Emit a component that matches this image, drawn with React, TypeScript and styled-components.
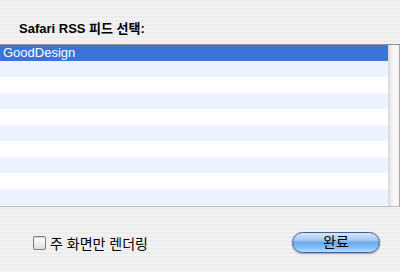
import React, { useState } from "react";
import styled, { createGlobalStyle } from "styled-components";

import type { FC } from "react";

const GlobalStyle = createGlobalStyle`
  html, body {
    margin: 0;
    padding: 0;
  }
  body {
    font-family: "Liberation Sans", "Noto Sans CJK KR", sans-serif;
  }
`;

const Sheet = styled.div`
  width: 400px;
  height: 272px;
  display: flex;
  flex-direction: column;
  background: repeating-linear-gradient(
    to bottom,
    #ececec 0px,
    #ececec 2px,
    #f2f2f2 2px,
    #f2f2f2 4px
  );
  overflow: hidden;
`;

const Title = styled.div`
  height: 44px;
  box-sizing: border-box;
  padding: 21px 0 0 19px;
  font-size: 13px;
  line-height: 16px;
  font-weight: bold;
  color: #000;
`;

const ListBox = styled.div`
  height: 163px;
  box-sizing: border-box;
  display: grid;
  grid-template-columns: 1fr 11px;
  border-top: 1px solid #8e8e8e;
  border-bottom: 1px solid #bdbdbd;
  border-right: 1px solid #a8a8a8;
  background: #fff;
`;

const Rows = styled.div`
  display: flex;
  flex-direction: column;
  overflow: hidden;
`;

const Row = styled.div<{ $selected?: boolean; $odd?: boolean }>`
  height: 16px;
  flex: none;
  padding-left: 3px;
  font-size: 13px;
  line-height: 16px;
  color: ${(p) => (p.$selected ? "#fff" : "#000")};
  background: ${(p) =>
    p.$selected ? "#3875d7" : p.$odd ? "#edf3fe" : "#ffffff"};
`;

const ScrollTrack = styled.div`
  background: linear-gradient(
    to right,
    #d8d8d8 0px,
    #ececec 3px,
    #f8f8f8 6px,
    #f4f4f4 11px
  );
`;

const Footer = styled.div`
  flex: 1;
  display: flex;
  align-items: center;
  justify-content: space-between;
  padding: 6px 20px 0 33px;
`;

const CheckLabel = styled.label`
  display: flex;
  align-items: center;
  gap: 4px;
  font-size: 14px;
  color: #000;
  cursor: default;
`;

const CheckBox = styled.span<{ $on: boolean }>`
  width: 11px;
  height: 12px;
  border: 1px solid #7d7d7d;
  border-radius: 2px;
  background: linear-gradient(to bottom, #ffffff 0%, #f0f0f0 50%, #dcdcdc 100%);
  box-shadow: inset 0 1px 1px rgba(0, 0, 0, 0.15);
  display: flex;
  align-items: center;
  justify-content: center;
  font-size: 10px;
  line-height: 1;
`;

const DoneButton = styled.button`
  width: 88px;
  height: 21px;
  border-radius: 11px;
  border: 1px solid #3e5f98;
  background: linear-gradient(
    to bottom,
    #d6e7fa 0%,
    #a9cdf3 35%,
    #6eaaea 50%,
    #7dbdf7 75%,
    #b6e2ff 100%
  );
  box-shadow: 0 1px 2px rgba(0, 0, 0, 0.35);
  font-family: "Liberation Sans", "Noto Sans CJK KR", sans-serif;
  font-size: 14px;
  line-height: 19px;
  padding: 0;
  color: #000;
`;

const feeds = ["GoodDesign"];

const App: FC = () => {
  const [mainOnly, setMainOnly] = useState(false);
  const rows = Array.from({ length: 10 }, (_, i) => feeds[i] ?? "");

  return (
    <Sheet>
      <GlobalStyle />
      <Title>Safari RSS 피드 선택:</Title>
      <ListBox>
        <Rows>
          {rows.map((name, i) => (
            <Row key={i} $selected={i === 0} $odd={i % 2 === 1}>
              {name}
            </Row>
          ))}
        </Rows>
        <ScrollTrack />
      </ListBox>
      <Footer>
        <CheckLabel onClick={() => setMainOnly(!mainOnly)}>
          <CheckBox $on={mainOnly}>{mainOnly ? "✓" : ""}</CheckBox>
          주 화면만 렌더링
        </CheckLabel>
        <DoneButton>완료</DoneButton>
      </Footer>
    </Sheet>
  );
};

export default App;
